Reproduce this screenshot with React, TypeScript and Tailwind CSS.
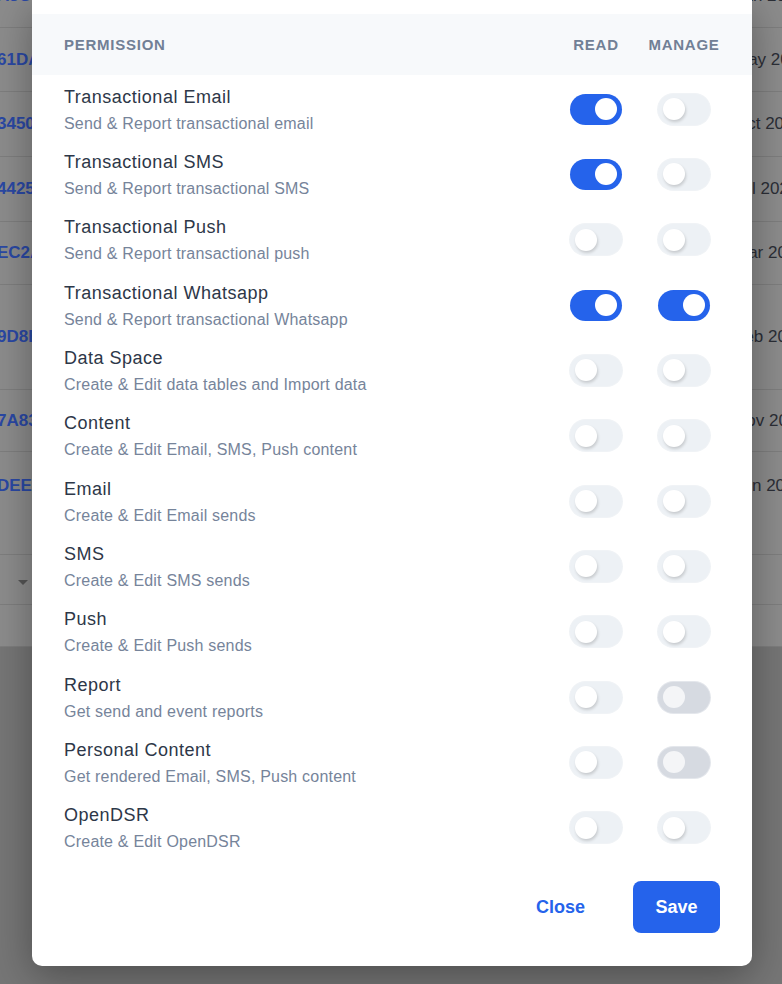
import React from 'react';

type ToggleState = 'on' | 'off' | 'disabled';

const permissions: { name: string; desc: string; read: ToggleState; manage: ToggleState }[] = [
  { name: 'Transactional Email', desc: 'Send & Report transactional email', read: 'on', manage: 'off' },
  { name: 'Transactional SMS', desc: 'Send & Report transactional SMS', read: 'on', manage: 'off' },
  { name: 'Transactional Push', desc: 'Send & Report transactional push', read: 'off', manage: 'off' },
  { name: 'Transactional Whatsapp', desc: 'Send & Report transactional Whatsapp', read: 'on', manage: 'on' },
  { name: 'Data Space', desc: 'Create & Edit data tables and Import data', read: 'off', manage: 'off' },
  { name: 'Content', desc: 'Create & Edit Email, SMS, Push content', read: 'off', manage: 'off' },
  { name: 'Email', desc: 'Create & Edit Email sends', read: 'off', manage: 'off' },
  { name: 'SMS', desc: 'Create & Edit SMS sends', read: 'off', manage: 'off' },
  { name: 'Push', desc: 'Create & Edit Push sends', read: 'off', manage: 'off' },
  { name: 'Report', desc: 'Get send and event reports', read: 'off', manage: 'disabled' },
  { name: 'Personal Content', desc: 'Get rendered Email, SMS, Push content', read: 'off', manage: 'disabled' },
  { name: 'OpenDSR', desc: 'Create & Edit OpenDSR', read: 'off', manage: 'off' },
];

// dimmed table behind the dialog
const bgRows: { h: string; id?: string; date?: string; top?: boolean; caret?: boolean }[] = [
  { h: 'h-[64px]', id: 'A3C9', date: 'Mth 2024' },
  { h: 'h-[64px]', id: '61DA', date: 'May 2024' },
  { h: 'h-[65px]', id: '3450', date: 'Oct 2023' },
  { h: 'h-[65px]', id: '4425', date: 'Jul 2023' },
  { h: 'h-[63px]', id: 'EC2A', date: 'Mar 2023' },
  { h: 'h-[105px]', id: '9D8B', date: 'Feb 2023' },
  { h: 'h-[62px]', id: '7A83', date: 'Nov 2022' },
  { h: 'h-[103px]', id: 'DEE1', date: 'Jun 2022', top: true },
  { h: 'h-[50px]', caret: true },
  { h: 'h-[42px]' },
];

function Toggle({ state }: { state: ToggleState }) {
  const on = state === 'on';
  return (
    <button
      type="button"
      role="switch"
      aria-checked={on}
      disabled={state === 'disabled'}
      className={`flex h-[31px] w-[52px] items-center rounded-full px-[5px] ${
        on
          ? 'bg-[#2563eb]'
          : state === 'disabled'
            ? 'bg-[#d6dae1] ring-1 ring-[#e4e7ec]'
            : 'bg-[#edf1f5] ring-1 ring-[#f0f3f6]'
      }`}
    >
      <span
        className={`h-[22px] w-[22px] rounded-full ${
          on
            ? 'translate-x-[20px] bg-white'
            : state === 'disabled'
              ? 'bg-[#f4f5f7]'
              : 'bg-white shadow-[1px_2px_3px_rgba(0,0,0,0.16)]'
        }`}
      />
    </button>
  );
}

export default function App() {
  return (
    <div className="relative h-[984px] w-full overflow-hidden bg-[#767676] font-['Liberation_Sans',Arial,sans-serif]">
      <div className="-mt-[36px] bg-[#8c8c8c]">
        {bgRows.map((r, i) => (
          <div
            key={i}
            className={`flex ${r.h} ${r.top ? 'items-start pt-[21px]' : 'items-center'} border-b border-[#7e7e7e]`}
          >
            <div className="flex-1 -ml-[3px] text-[17px] font-bold text-[#2a48a4]">
              {r.id}
              {r.caret && (
                <span className="ml-[21px] inline-block border-x-[5px] border-t-[5px] border-x-transparent border-t-[#555]" />
              )}
            </div>
            <div className="w-[48px] whitespace-nowrap text-[17px] text-[#2b2e36]">{r.date}</div>
          </div>
        ))}
      </div>

      <div className="absolute left-[32px] top-0 w-[720px] rounded-b-[10px] bg-white pt-[14px] shadow-[0_10px_40px_rgba(0,0,0,0.35)]">
        <div className="grid h-[61px] grid-cols-[1fr_72px_72px] items-center gap-x-4 bg-[#f7f9fb] px-8 pt-[2px] text-[15px] font-bold tracking-wider text-[#718096]">
          <div>PERMISSION</div>
          <div className="text-center">READ</div>
          <div className="text-center">MANAGE</div>
        </div>

        {permissions.map((p) => (
          <div key={p.name} className="grid h-[65.35px] grid-cols-[1fr_72px_72px] items-start gap-x-4 px-8">
            <div className="pt-[8.5px]">
              <div className="text-[18px] leading-[26px] tracking-[0.5px] text-[#2d3748]">{p.name}</div>
              <div className="text-[16px] leading-[28px] tracking-[0.2px] text-[#76849a]">{p.desc}</div>
            </div>
            <div className="flex justify-center pt-[18.5px]">
              <Toggle state={p.read} />
            </div>
            <div className="flex justify-center pt-[18.5px]">
              <Toggle state={p.manage} />
            </div>
          </div>
        ))}

        <div className="flex items-center justify-end gap-6 px-8 pb-[33px] pt-[22px]">
          <button type="button" className="px-6 text-[18px] font-bold text-[#2563eb]">
            Close
          </button>
          <button
            type="button"
            className="h-[52px] w-[87px] rounded-lg bg-[#2563eb] text-[18px] font-bold text-white"
          >
            Save
          </button>
        </div>
      </div>
    </div>
  );
}
